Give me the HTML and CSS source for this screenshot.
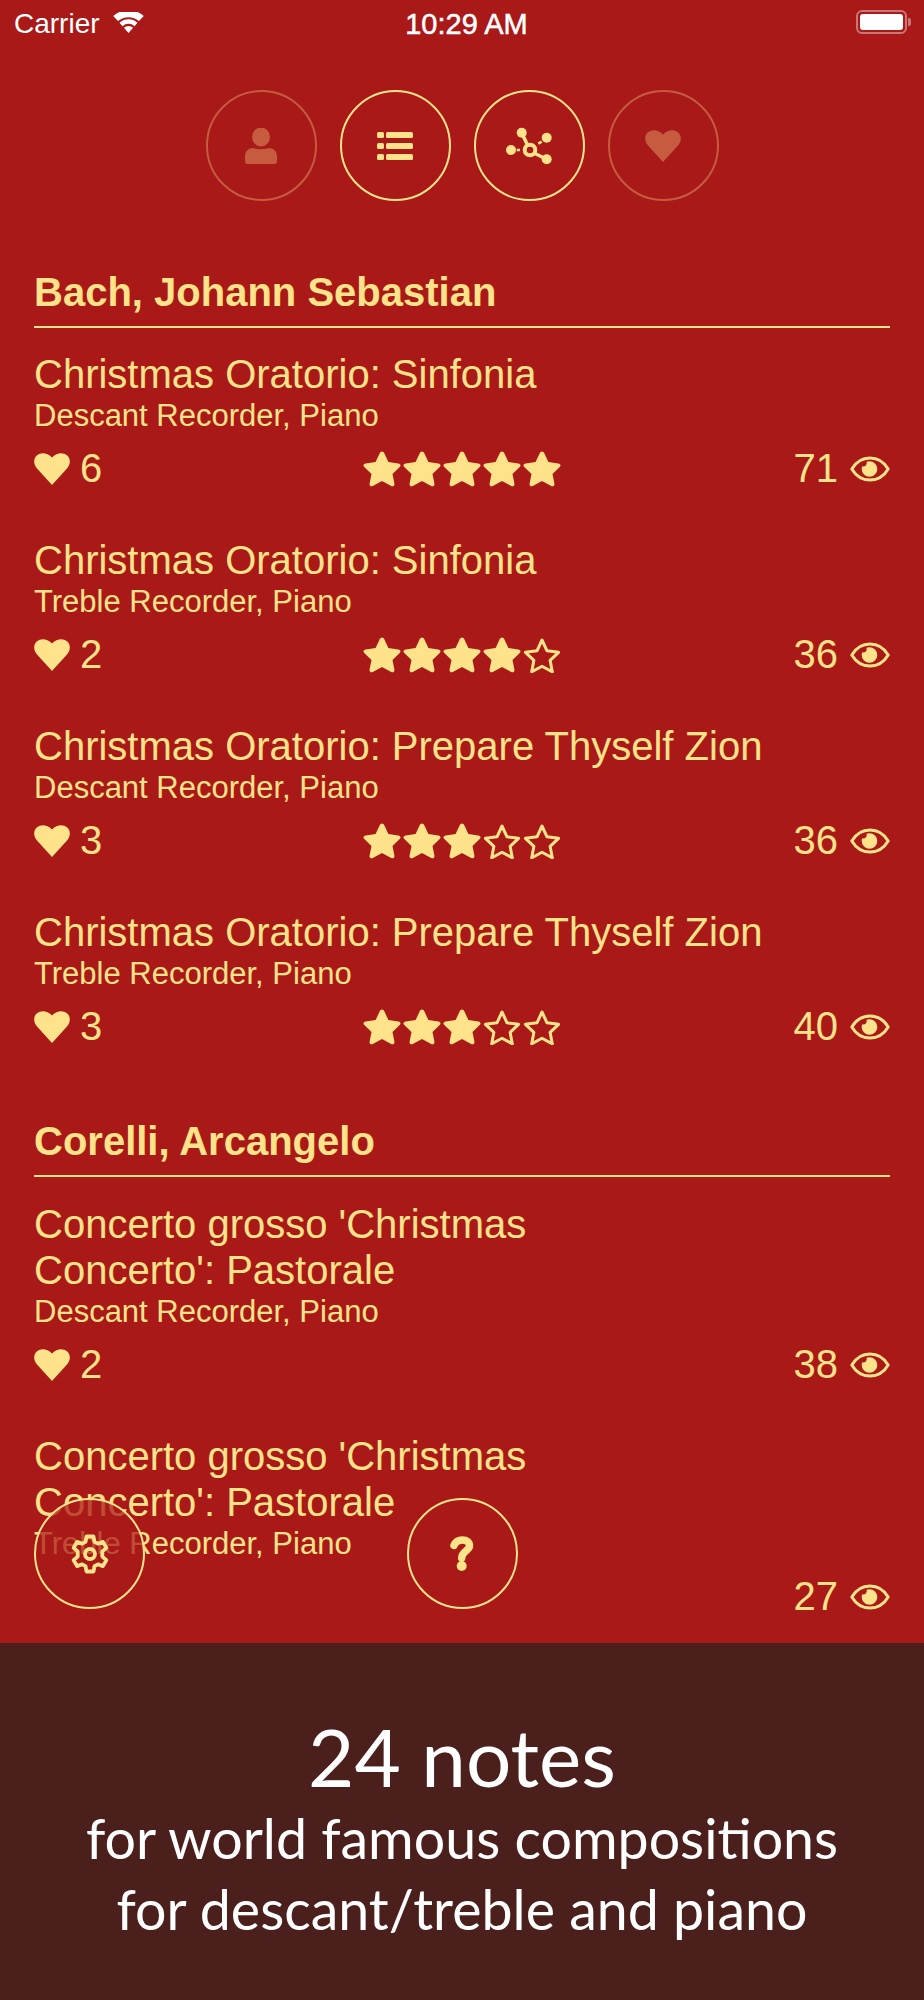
FILE: index.html
```html
<!DOCTYPE html>
<html lang="en">
<head>
    <meta charset="UTF-8">
    <meta name="viewport" content="width=device-width, initial-scale=1.0">
    <title>24 notes</title>
    <link rel="stylesheet" href="styles.css">
</head>
<body>
    <svg class="sprites" width="0" height="0">
        <symbol id="heart" viewBox="0 0 36 32">
            <path d="M18 32 3 15.500C-1 11-.5 5 3 2.300 6.800-.8 13-.6 18 4.500 23-.6 29.200-.8 33 2.300 36.500 5 37 11 33 15.500Z"/>
        </symbol>
        <symbol id="star" viewBox="0 0 38 36">
            <path d="M19 .5c1 0 1.800.7 2.300 1.800l4.100 8.800 9.900 1.300c2.200.3 2.900 2.200 1.400 3.700l-7.200 6.800 1.900 9.700c.4 2.100-1.300 3.300-3.200 2.300L19 30.100l-9.200 4.800c-1.900 1-3.600-.2-3.200-2.300l1.900-9.700-7.200-6.800c-1.500-1.500-.8-3.400 1.400-3.700l9.900-1.300 4.100-8.800C17.200 1.200 18 .5 19 .5Z"/>
        </symbol>
        <symbol id="star-empty" viewBox="0 0 38 36">
            <path class="outline" d="M19 3l5 10.800 11.600 1.500-8.500 8 2.200 11.500L19 29.200 8.700 34.800l2.200-11.500-8.500-8L14 13.800Z"/>
        </symbol>
        <symbol id="eye" viewBox="0 0 40 26">
            <path class="outline" d="M1.800 13C6 6 12.500 2 20 2s14 4 18.200 11C34 20 27.500 24 20 24S6 20 1.800 13Z"/>
            <path d="M19.500 5.200a7.800 7.800 0 1 1-7.800 7.800c0-1 .2-1.900.5-2.700a3.400 3.400 0 0 0 4.300-4.500c.9-.4 1.900-.6 3-.6Z"/>
        </symbol>
    </svg>

    <div class="screen">
        <div class="status-bar">
            <div class="carrier">
                <span>Carrier</span>
                <svg class="wifi" viewBox="0 0 32 22" width="31" height="21">
                    <path d="M16 22 11.200 16.500a7 7 0 0 1 9.600 0Z"/>
                    <path d="M9.700 14.800 6.600 11.200a14.300 14.300 0 0 1 18.800 0l-3.100 3.600a9.400 9.400 0 0 0-12.600 0Z"/>
                    <path d="M5 9.500 0 4.300a23.500 23.500 0 0 1 32 0l-5 5.200a17 17 0 0 0-22 0Z"/>
                </svg>
            </div>
            <div class="time">10:29 AM</div>
            <div class="battery"><div class="battery-level"></div></div>
        </div>

        <div class="tabs">
            <button class="round-btn dimmed">
                <svg viewBox="0 0 32 36" width="32" height="36">
                    <ellipse cx="16" cy="9" rx="9" ry="9.500"/>
                    <path d="M0 33V28C0 23 4 20 8 20 11 21.500 21 21.500 24 20 28 20 32 23 32 28V33C32 35 31 36 29.500 36H2.500C1 36 0 35 0 33Z"/>
                </svg>
            </button>
            <button class="round-btn">
                <svg viewBox="0 0 36 28" width="36" height="28">
                    <rect x="0" y="0" width="7" height="6" rx="1.500"/>
                    <rect x="9" y="0" width="27" height="6" rx="1.500"/>
                    <rect x="0" y="11" width="7" height="6" rx="1.500"/>
                    <rect x="9" y="11" width="27" height="6" rx="1.500"/>
                    <rect x="0" y="22" width="7" height="6" rx="1.500"/>
                    <rect x="9" y="22" width="27" height="6" rx="1.500"/>
                </svg>
            </button>
            <button class="round-btn">
                <svg class="network" viewBox="0 0 46 40" width="46" height="40">
                    <circle cx="15.700" cy="6.700" r="5"/>
                    <circle cx="40.700" cy="11.700" r="5"/>
                    <circle cx="5" cy="24" r="5"/>
                    <circle cx="40.700" cy="33.300" r="5"/>
                    <path class="link" d="M15.700 6.700 21 18M29 27.500 40.700 33.300"/>
                    <path class="link thin" d="M10.700 24H14M32.300 17.700 35.700 15.700"/>
                    <circle class="hub" cx="24" cy="24" r="5.300"/>
                </svg>
            </button>
            <button class="round-btn dimmed">
                <svg viewBox="0 0 36 32" width="36" height="32"><use href="#heart"/></svg>
            </button>
        </div>

        <div class="list">
            <section class="composer">
                <h2>Bach, Johann Sebastian</h2>

                <div class="piece">
                    <h3>Christmas Oratorio: Sinfonia</h3>
                    <p>Descant Recorder, Piano</p>
                    <div class="meta">
                        <div class="likes"><svg class="like-icon"><use href="#heart"/></svg>6</div>
                        <div class="stars">
                            <svg><use href="#star"/></svg><svg><use href="#star"/></svg><svg><use href="#star"/></svg><svg><use href="#star"/></svg><svg><use href="#star"/></svg>
                        </div>
                        <div class="views">71<svg class="eye-icon"><use href="#eye"/></svg></div>
                    </div>
                </div>

                <div class="piece">
                    <h3>Christmas Oratorio: Sinfonia</h3>
                    <p>Treble Recorder, Piano</p>
                    <div class="meta">
                        <div class="likes"><svg class="like-icon"><use href="#heart"/></svg>2</div>
                        <div class="stars">
                            <svg><use href="#star"/></svg><svg><use href="#star"/></svg><svg><use href="#star"/></svg><svg><use href="#star"/></svg><svg><use href="#star-empty"/></svg>
                        </div>
                        <div class="views">36<svg class="eye-icon"><use href="#eye"/></svg></div>
                    </div>
                </div>

                <div class="piece">
                    <h3>Christmas Oratorio: Prepare Thyself Zion</h3>
                    <p>Descant Recorder, Piano</p>
                    <div class="meta">
                        <div class="likes"><svg class="like-icon"><use href="#heart"/></svg>3</div>
                        <div class="stars">
                            <svg><use href="#star"/></svg><svg><use href="#star"/></svg><svg><use href="#star"/></svg><svg><use href="#star-empty"/></svg><svg><use href="#star-empty"/></svg>
                        </div>
                        <div class="views">36<svg class="eye-icon"><use href="#eye"/></svg></div>
                    </div>
                </div>

                <div class="piece">
                    <h3>Christmas Oratorio: Prepare Thyself Zion</h3>
                    <p>Treble Recorder, Piano</p>
                    <div class="meta">
                        <div class="likes"><svg class="like-icon"><use href="#heart"/></svg>3</div>
                        <div class="stars">
                            <svg><use href="#star"/></svg><svg><use href="#star"/></svg><svg><use href="#star"/></svg><svg><use href="#star-empty"/></svg><svg><use href="#star-empty"/></svg>
                        </div>
                        <div class="views">40<svg class="eye-icon"><use href="#eye"/></svg></div>
                    </div>
                </div>
            </section>

            <section class="composer">
                <h2>Corelli, Arcangelo</h2>

                <div class="piece">
                    <h3>Concerto grosso 'Christmas<br>Concerto': Pastorale</h3>
                    <p>Descant Recorder, Piano</p>
                    <div class="meta">
                        <div class="likes"><svg class="like-icon"><use href="#heart"/></svg>2</div>
                        <div class="stars"></div>
                        <div class="views">38<svg class="eye-icon"><use href="#eye"/></svg></div>
                    </div>
                </div>

                <div class="piece">
                    <h3>Concerto grosso 'Christmas<br>Concerto': Pastorale</h3>
                    <p>Treble Recorder, Piano</p>
                    <div class="meta">
                        <div class="likes"></div>
                        <div class="stars"></div>
                        <div class="views">27<svg class="eye-icon"><use href="#eye"/></svg></div>
                    </div>
                </div>
            </section>

            <button class="round-btn float-btn settings-btn">
                <svg viewBox="0 0 38 40" width="38" height="40">
                    <path class="outline gear" d="M15.500 2.500h7l1 5.300 3.400 1.900 5-1.800 3.500 6-4.100 3.500v5.200l4.100 3.500-3.500 6-5-1.800-3.400 1.900-1 5.300h-7l-1-5.300-3.400-1.900-5 1.800-3.500-6 4.100-3.500v-5.200L2.600 13.900l3.500-6 5 1.800 3.400-1.900Z"/>
                    <circle class="outline gear" cx="19" cy="20" r="5"/>
                </svg>
            </button>
            <button class="round-btn float-btn help-btn">
                <svg viewBox="0 0 26 36" width="26" height="36">
                    <path class="outline help" d="M4 9.500C5.500 5.500 9 4 12.500 4 16.500 4 19.500 6.200 19.500 9.800c0 5.200-7.800 5.200-7.800 12.200"/>
                    <circle cx="11.700" cy="30" r="5"/>
                </svg>
            </button>
        </div>

        <footer class="promo">
            <div class="promo-title">24 notes</div>
            <div class="promo-line">for world famous compositions</div>
            <div class="promo-line">for descant/treble and piano</div>
        </footer>
    </div>
</body>
</html>
```

FILE: styles.css
```css
* {
    box-sizing: border-box;
}
body {
    margin: 0;
    font-family: "Liberation Sans", Arial, sans-serif;
    color: #ffe38a;
    background-color: #a91918;
}
h2, h3, p {
    margin: 0;
    font-weight: normal;
}
svg {
    display: block;
    fill: currentColor;
}
.sprites {
    position: absolute;
}
.outline {
    fill: none;
    stroke: currentColor;
    stroke-width: 3;
    stroke-linejoin: round;
}
.screen {
    display: flex;
    flex-direction: column;
    height: 2000px;
    overflow: hidden;
}

/* status bar */
.status-bar {
    display: grid;
    grid-template-columns: 1fr auto 1fr;
    align-items: center;
    height: 48px;
    padding: 0 17px 0 14px;
    color: #fff;
}
.carrier {
    display: flex;
    align-items: center;
    gap: 13px;
    font-size: 28px;
}
.wifi {
    margin-top: -3px;
}
.time {
    margin-left: 12px;
    font-size: 29px;
    -webkit-text-stroke: 0.5px #fff;
}
.battery {
    justify-self: end;
    align-self: start;
    position: relative;
    width: 51px;
    height: 24px;
    margin-top: 10px;
    padding: 2px;
    border: 2px solid rgba(255,255,255,0.4);
    border-radius: 6px;
}
.battery::after {
    content: "";
    position: absolute;
    right: -6px;
    top: 6px;
    width: 3px;
    height: 8px;
    border-radius: 0 2px 2px 0;
    background-color: rgba(255,255,255,0.4);
}
.battery-level {
    height: 100%;
    border-radius: 3px;
    background-color: #fff;
}

/* round buttons */
.tabs {
    display: flex;
    justify-content: center;
    gap: 23px;
    padding-top: 42px;
}
.round-btn {
    display: flex;
    align-items: center;
    justify-content: center;
    width: 111px;
    height: 111px;
    padding: 0;
    color: inherit;
    background: none;
    border: 2px solid #ffe38a;
    border-radius: 50%;
}
.round-btn.dimmed {
    color: #c65b3f;
    border-color: #c65b3f;
}
.network .link {
    fill: none;
    stroke: currentColor;
    stroke-width: 3.500;
}
.network .link.thin {
    stroke-width: 2.500;
}
.network .hub {
    fill: #a91918;
    stroke: currentColor;
    stroke-width: 4;
}
.float-btn {
    position: absolute;
    top: 1498px;
    background-color: rgba(169,25,24,0.75);
}
.settings-btn {
    left: 34px;
}
.help-btn {
    left: 407px;
}
.outline.gear {
    stroke-width: 3.800;
}
.outline.help {
    stroke-width: 7.500;
    stroke-linecap: round;
}

/* list */
.list {
    flex: 1;
    overflow: hidden;
    padding: 0 34px;
}
.composer {
    padding-top: 23px;
}
.composer:first-child {
    padding-top: 68px;
}
h2 {
    height: 59px;
    padding-bottom: 11px;
    font-size: 40px;
    line-height: 46px;
    font-weight: bold;
    border-bottom: 2px solid #ffe38a;
}
.piece {
    padding-bottom: 49px;
}
.composer h2 + .piece {
    padding-top: 24px;
}
.composer:first-child h2 + .piece {
    padding-top: 23px;
}
h3 {
    font-size: 40px;
    line-height: 46px;
}
.piece p {
    margin-top: 1px;
    font-size: 31px;
    line-height: 36px;
}
.meta {
    display: grid;
    grid-template-columns: 1fr auto 1fr;
    align-items: center;
    height: 42px;
    margin-top: 12px;
    font-size: 40px;
}
.likes {
    display: flex;
    align-items: center;
    gap: 10px;
}
.like-icon {
    width: 36px;
    height: 32px;
}
.stars {
    display: flex;
    gap: 2px;
}
.stars svg {
    width: 38px;
    height: 36px;
}
.views {
    display: flex;
    align-items: center;
    justify-content: flex-end;
    gap: 12px;
}
.eye-icon {
    width: 40px;
    height: 26px;
}

/* promo */
.promo {
    flex: none;
    height: 357px;
    padding-top: 67px;
    color: #fff;
    text-align: center;
    font-family: Lato, "Open Sans", sans-serif;
    background-color: #4a1f1c;
}
.promo-title {
    font-size: 80px;
    line-height: 92px;
}
.promo-line {
    font-size: 55.500px;
    line-height: 71px;
}
```
